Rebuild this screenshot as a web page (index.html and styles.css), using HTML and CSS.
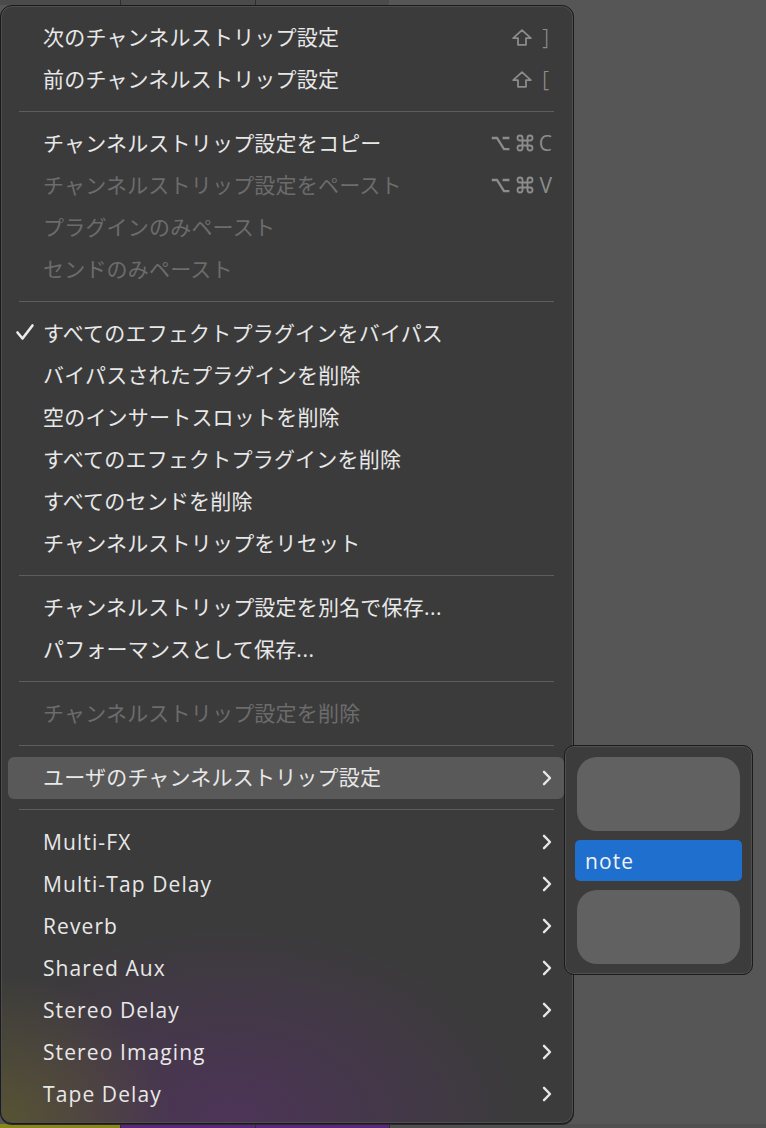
FILE: index.html
```html
<!DOCTYPE html>
<html lang="ja">
<head>
<meta charset="utf-8">
<title>Channel strip menu</title>
<link rel="stylesheet" href="styles.css">
</head>
<body>
<div class="screen">
  <div class="strip top">
    <div class="cell c1"></div><div class="cell c2"></div><div class="cell c3"></div><div class="cell rest"></div>
  </div>
  <div class="middle"></div>
  <div class="strip bottom">
    <div class="cell c1 olive"></div><div class="cell c2 purple"></div><div class="cell c3 purple"></div><div class="cell rest"></div>
  </div>

  <div class="menu">
    <div class="row"><span class="label">次のチャンネルストリップ設定</span>
      <span class="keys"><svg class="shift" viewBox="0 0 20 17"><path d="M10 1.2 L18.8 9.2 H14 V15.8 H6 V9.2 H1.2 Z"/></svg><span class="key br">]</span></span></div>
    <div class="row"><span class="label">前のチャンネルストリップ設定</span>
      <span class="keys"><svg class="shift" viewBox="0 0 20 17"><path d="M10 1.2 L18.8 9.2 H14 V15.8 H6 V9.2 H1.2 Z"/></svg><span class="key br">[</span></span></div>
    <div class="sep"></div>
    <div class="row"><span class="label">チャンネルストリップ設定をコピー</span>
      <span class="keys"><svg class="opt" viewBox="0 0 19 15"><path d="M0.8 2 H6 L13 13.2 H18.4 M11.6 2 H18.4"/></svg><svg class="cmd" viewBox="0 0 24 24"><path d="M15 6v12a3 3 0 1 0 3-3H6a3 3 0 1 0 3 3V6a3 3 0 1 0-3 3h12a3 3 0 1 0-3-3"/></svg><span class="key">C</span></span></div>
    <div class="row disabled"><span class="label">チャンネルストリップ設定をペースト</span>
      <span class="keys"><svg class="opt" viewBox="0 0 19 15"><path d="M0.8 2 H6 L13 13.2 H18.4 M11.6 2 H18.4"/></svg><svg class="cmd" viewBox="0 0 24 24"><path d="M15 6v12a3 3 0 1 0 3-3H6a3 3 0 1 0 3 3V6a3 3 0 1 0-3 3h12a3 3 0 1 0-3-3"/></svg><span class="key">V</span></span></div>
    <div class="row disabled"><span class="label">プラグインのみペースト</span></div>
    <div class="row disabled"><span class="label">センドのみペースト</span></div>
    <div class="sep"></div>
    <div class="row"><svg class="check" viewBox="0 0 20 18"><path d="M2.5 9.5 L7.5 15.5 L17.5 2.5"/></svg><span class="label">すべてのエフェクトプラグインをバイパス</span></div>
    <div class="row"><span class="label">バイパスされたプラグインを削除</span></div>
    <div class="row"><span class="label">空のインサートスロットを削除</span></div>
    <div class="row"><span class="label">すべてのエフェクトプラグインを削除</span></div>
    <div class="row"><span class="label">すべてのセンドを削除</span></div>
    <div class="row"><span class="label">チャンネルストリップをリセット</span></div>
    <div class="sep"></div>
    <div class="row"><span class="label">チャンネルストリップ設定を別名で保存<span class="lat">...</span></span></div>
    <div class="row"><span class="label">パフォーマンスとして保存<span class="lat">...</span></span></div>
    <div class="sep"></div>
    <div class="row disabled"><span class="label">チャンネルストリップ設定を削除</span></div>
    <div class="sep"></div>
    <div class="row active"><span class="label">ユーザのチャンネルストリップ設定</span>
      <svg class="chev" viewBox="0 0 10 16"><path d="M2 1.8 L8 8 L2 14.2"/></svg></div>
    <div class="sep"></div>
    <div class="row"><span class="label latin">Multi-FX</span><svg class="chev" viewBox="0 0 10 16"><path d="M2 1.8 L8 8 L2 14.2"/></svg></div>
    <div class="row"><span class="label latin">Multi-Tap Delay</span><svg class="chev" viewBox="0 0 10 16"><path d="M2 1.8 L8 8 L2 14.2"/></svg></div>
    <div class="row"><span class="label latin">Reverb</span><svg class="chev" viewBox="0 0 10 16"><path d="M2 1.8 L8 8 L2 14.2"/></svg></div>
    <div class="row"><span class="label latin">Shared Aux</span><svg class="chev" viewBox="0 0 10 16"><path d="M2 1.8 L8 8 L2 14.2"/></svg></div>
    <div class="row"><span class="label latin">Stereo Delay</span><svg class="chev" viewBox="0 0 10 16"><path d="M2 1.8 L8 8 L2 14.2"/></svg></div>
    <div class="row"><span class="label latin">Stereo Imaging</span><svg class="chev" viewBox="0 0 10 16"><path d="M2 1.8 L8 8 L2 14.2"/></svg></div>
    <div class="row"><span class="label latin">Tape Delay</span><svg class="chev" viewBox="0 0 10 16"><path d="M2 1.8 L8 8 L2 14.2"/></svg></div>
  </div>

  <div class="submenu">
    <div class="block"></div>
    <div class="subitem"><span class="latin">note</span></div>
    <div class="block"></div>
  </div>
</div>
</body>
</html>
```

FILE: styles.css
```css
html, body {
  margin: 0;
  padding: 0;
}
body {
  background: #565656;
  font-family: "Noto Sans CJK JP", "Open Sans", sans-serif;
  -webkit-font-smoothing: antialiased;
}
.screen {
  position: relative;
  width: 766px;
  height: 1128px;
  overflow: hidden;
  display: flex;
  flex-direction: column;
  background: #565656;
}
.strip {
  display: flex;
  height: 5px;
  flex: none;
}
.strip .cell {
  height: 100%;
}
.strip .c1 { width: 120px; }
.strip .c2 { width: 134px; border-left: 1px solid #2e2e2e; }
.strip .c3 { width: 133px; border-left: 1px solid #2e2e2e; }
.strip .rest { flex: 1; border-left: 1px solid #2e2e2e; }
.strip.top .cell { background: #4b4b4b; }
.strip.top .rest { background: #565656; border-left: none; }
.middle { flex: 1; }
.strip.bottom { height: 4px; }
.strip.bottom .olive { background: #86861a; }
.strip.bottom .purple { background: #5c2580; }
.strip.bottom .rest { background: #4f4f4f; }

.menu {
  position: absolute;
  left: 0;
  top: 5px;
  width: 572px;
  height: 1106px;
  box-sizing: content-box;
  border: 1px solid #1b1b1b;
  border-radius: 12px;
  box-shadow: inset 0 0 0 1px #4e4e4e, 0 1px 0 #2a2a2a;
  padding-top: 11px;
  background:
    radial-gradient(ellipse 170px 150px at 0% 100%, rgba(120, 120, 30, 0.42), rgba(120,120,30,0) 100%),
    radial-gradient(ellipse 300px 200px at 40% 100%, rgba(110, 40, 140, 0.36), rgba(110,40,140,0) 100%),
    #3b3b3b;
  display: flex;
  flex-direction: column;
  color: #e8e8e8;
}
.row {
  height: 42px;
  flex: none;
  margin: 0 9px 0 7px;
  padding: 0 12px 0 35px;
  display: flex;
  align-items: center;
  position: relative;
  border-radius: 6px;
}
.label {
  font-size: 21px;
  letter-spacing: 0.2px;
  white-space: nowrap;
  line-height: 38px;
  margin-bottom: 4px;
}
.label.latin, .latin {
  font-family: "Open Sans", "Noto Sans CJK JP", sans-serif;
  font-weight: 500;
  letter-spacing: 1.1px;
}
.label.latin {
  margin-bottom: 1px;
}
.lat {
  font-family: "Open Sans", sans-serif;
  letter-spacing: 0.5px;
}
.row.disabled { color: #6c6c6c; }
.row.active { background: #595959; }
.sep {
  flex: none;
  height: 1px;
  margin: 10px 19px 11px 18px;
  background: #5d5d5d;
}
.keys {
  margin-left: auto;
  display: flex;
  align-items: center;
  color: #8c8c8c;
  margin-bottom: 2px;
}
.key {
  font-family: "Open Sans", sans-serif;
  font-weight: 500;
  font-size: 21px;
  line-height: 38px;
}
.key.br {
  font-family: "Noto Sans", "Open Sans", sans-serif;
  font-weight: 300;
  margin-left: 10px;
  margin-right: 3px;
}
.shift {
  width: 20px;
  height: 17px;
  fill: none;
  stroke: #8c8c8c;
  stroke-width: 1.8;
  stroke-linejoin: round;
}
.opt {
  width: 19px;
  height: 15px;
  fill: none;
  stroke: #8c8c8c;
  stroke-width: 2.3;
}
.cmd {
  width: 20px;
  height: 20px;
  margin-left: 5px;
  margin-right: 4px;
  fill: none;
  stroke: #8c8c8c;
  stroke-width: 2.2;
}
.check {
  position: absolute;
  left: 7px;
  top: 10px;
  width: 20px;
  height: 18px;
  fill: none;
  stroke: #ececec;
  stroke-width: 2.6;
  stroke-linecap: round;
  stroke-linejoin: round;
}
.chev {
  margin-left: auto;
  width: 10px;
  height: 16px;
  fill: none;
  stroke: #e6e6e6;
  stroke-width: 2.4;
  stroke-linecap: round;
  stroke-linejoin: round;
}

.submenu {
  position: absolute;
  left: 564px;
  top: 745px;
  width: 167px;
  box-sizing: content-box;
  border: 1px solid #1b1b1b;
  border-radius: 10px;
  box-shadow: inset 0 0 0 1px #4f4f4f;
  background: #3c3c3c;
  padding: 11px 10px 10px 10px;
  display: flex;
  flex-direction: column;
  gap: 9px;
}
.block {
  height: 74px;
  margin: 0 2px;
  border-radius: 20px;
  background: #616161;
}
.subitem {
  height: 41px;
  border-radius: 5px;
  background: #1f6fcf;
  display: flex;
  align-items: center;
  padding-left: 10px;
  color: #f2f2f2;
  font-size: 21px;
}
```
